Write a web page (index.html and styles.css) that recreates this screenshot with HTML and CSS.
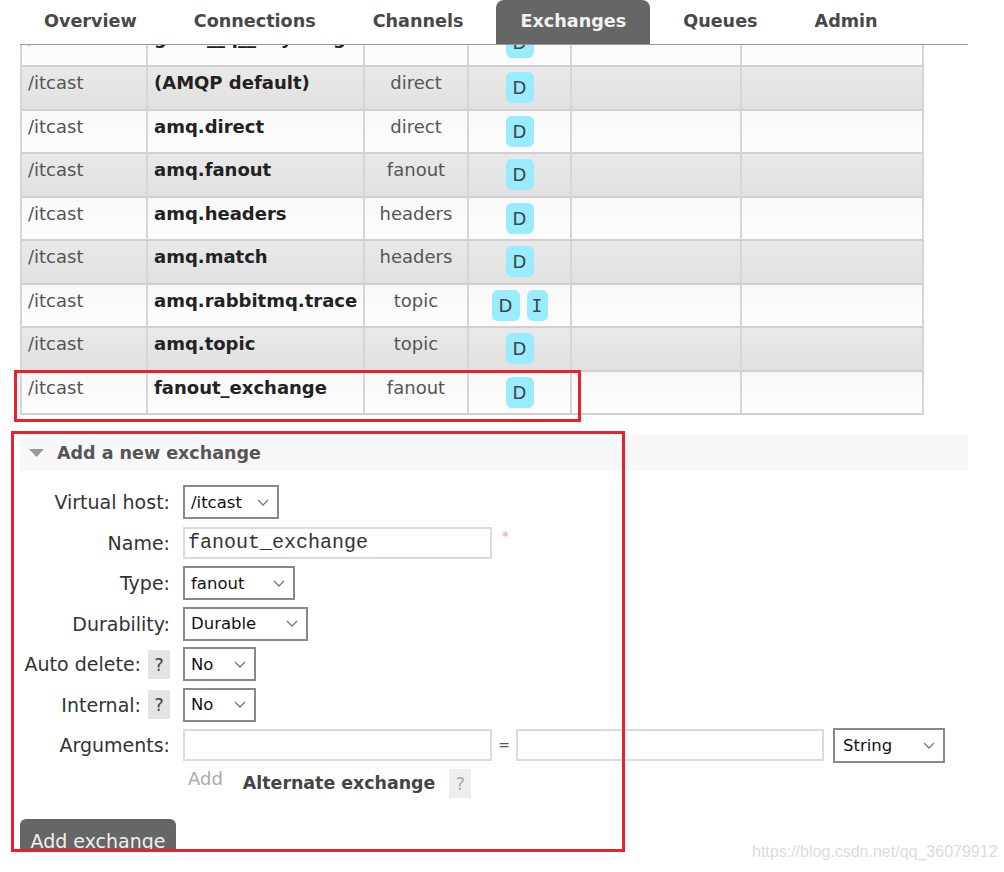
FILE: index.html
```html
<!DOCTYPE html>
<html>
  <head>
    <meta charset="utf-8">
    <title>RabbitMQ Management - Exchanges</title>
    <link rel="stylesheet" href="styles.css">
  </head>

  <body>
    <div class="page">
      <!-- Top navigation -->
      <nav class="tabs">
        <a href="#">Overview</a>
        <a href="#">Connections</a>
        <a href="#">Channels</a>
        <a href="#" class="active">Exchanges</a>
        <a href="#">Queues</a>
        <a href="#">Admin</a>
      </nav>

      <!-- Exchange list (scrolled, first row cut under the nav) -->
      <div class="list-wrap">
        <table class="list">
          <colgroup>
            <col class="c-vhost">
            <col class="c-name">
            <col class="c-type">
            <col class="c-feat">
            <col class="c-rate-in">
            <col class="c-rate-out">
          </colgroup>
          <tr class="alt2 cut">
            <td>/</td>
            <td class="name">gtest__q__anything</td>
            <td class="type">fanout</td>
            <td class="features"><span class="badge">D</span></td>
            <td></td><td></td>
          </tr>
          <tr class="alt1">
            <td>/itcast</td>
            <td class="name">(AMQP default)</td>
            <td class="type">direct</td>
            <td class="features"><span class="badge">D</span></td>
            <td></td><td></td>
          </tr>
          <tr class="alt2">
            <td>/itcast</td>
            <td class="name">amq.direct</td>
            <td class="type">direct</td>
            <td class="features"><span class="badge">D</span></td>
            <td></td><td></td>
          </tr>
          <tr class="alt1">
            <td>/itcast</td>
            <td class="name">amq.fanout</td>
            <td class="type">fanout</td>
            <td class="features"><span class="badge">D</span></td>
            <td></td><td></td>
          </tr>
          <tr class="alt2">
            <td>/itcast</td>
            <td class="name">amq.headers</td>
            <td class="type">headers</td>
            <td class="features"><span class="badge">D</span></td>
            <td></td><td></td>
          </tr>
          <tr class="alt1">
            <td>/itcast</td>
            <td class="name">amq.match</td>
            <td class="type">headers</td>
            <td class="features"><span class="badge">D</span></td>
            <td></td><td></td>
          </tr>
          <tr class="alt2">
            <td>/itcast</td>
            <td class="name">amq.rabbitmq.trace</td>
            <td class="type">topic</td>
            <td class="features"><span class="badge">D</span><span class="badge badge-i">I</span></td>
            <td></td><td></td>
          </tr>
          <tr class="alt1">
            <td>/itcast</td>
            <td class="name">amq.topic</td>
            <td class="type">topic</td>
            <td class="features"><span class="badge">D</span></td>
            <td></td><td></td>
          </tr>
          <tr class="alt2">
            <td>/itcast</td>
            <td class="name">fanout_exchange</td>
            <td class="type">fanout</td>
            <td class="features"><span class="badge">D</span></td>
            <td></td><td></td>
          </tr>
        </table>
      </div>

      <!-- Add a new exchange -->
      <div class="section">
        <h2 class="section-head">
          <svg class="arrow" width="15" height="8" viewBox="0 0 15 8"><polygon points="0,0 15,0 7.5,8" fill="#999"/></svg>
          Add a new exchange
        </h2>

        <div class="form">
          <div class="label">Virtual host:</div>
          <div class="field">
            <div class="select s-vhost"><span>/itcast</span><svg width="12" height="7" viewBox="0 0 12 7"><polyline points="1,1 6,6 11,1" fill="none" stroke="#777" stroke-width="1.3"/></svg></div>
          </div>

          <div class="label">Name:</div>
          <div class="field">
            <div class="input mono">fanout_exchange</div>
            <span class="required">*</span>
          </div>

          <div class="label">Type:</div>
          <div class="field">
            <div class="select s-type"><span>fanout</span><svg width="12" height="7" viewBox="0 0 12 7"><polyline points="1,1 6,6 11,1" fill="none" stroke="#777" stroke-width="1.3"/></svg></div>
          </div>

          <div class="label">Durability:</div>
          <div class="field">
            <div class="select s-dur"><span>Durable</span><svg width="12" height="7" viewBox="0 0 12 7"><polyline points="1,1 6,6 11,1" fill="none" stroke="#777" stroke-width="1.3"/></svg></div>
          </div>

          <div class="label">Auto delete: <span class="help">?</span></div>
          <div class="field">
            <div class="select s-bool"><span>No</span><svg width="12" height="7" viewBox="0 0 12 7"><polyline points="1,1 6,6 11,1" fill="none" stroke="#777" stroke-width="1.3"/></svg></div>
          </div>

          <div class="label">Internal: <span class="help">?</span></div>
          <div class="field">
            <div class="select s-bool"><span>No</span><svg width="12" height="7" viewBox="0 0 12 7"><polyline points="1,1 6,6 11,1" fill="none" stroke="#777" stroke-width="1.3"/></svg></div>
          </div>

          <div class="label">Arguments:</div>
          <div class="field args">
            <div class="input arg-key"></div>
            <span class="eq">=</span>
            <div class="input arg-val"></div>
            <div class="select s-argtype"><span>String</span><svg width="12" height="7" viewBox="0 0 12 7"><polyline points="1,1 6,6 11,1" fill="none" stroke="#777" stroke-width="1.3"/></svg></div>
          </div>

          <div class="label"></div>
          <div class="field extra">
            <span class="add-link">Add</span>
            <span class="alt-label">Alternate exchange</span>
            <span class="help help-light">?</span>
          </div>
        </div>

        <div class="submit">
          <button type="button">Add exchange</button>
        </div>
      </div>

      <!-- red annotation boxes -->
      <div class="mark mark-row"></div>
      <div class="mark mark-form"></div>

      <div class="watermark">https://blog.csdn.net/qq_36079912</div>
    </div>
  </body>
</html>
```

FILE: styles.css
```css
/* Reset */
* {
  margin: 0;
  padding: 0;
  box-sizing: border-box;
}

body {
  font-family: "DejaVu Sans", Verdana, sans-serif;
  font-size: 18px;
  color: #333;
  background-color: #fff;
}

.page {
  position: relative;
  width: 1004px;
  height: 872px;
  overflow: hidden;
}

/* Tabs */
.tabs {
  display: flex;
  gap: 9px;
  margin-left: 20px;
  width: 948px;
  height: 45px;
  border-bottom: 1px solid #999;
}
.tabs a {
  display: block;
  height: 44px;
  padding: 0 24px;
  line-height: 42px;
  font-size: 17.6px;
  font-weight: bold;
  color: #484848;
  text-decoration: none;
  border-radius: 8px 8px 0 0;
}
.tabs a.active {
  background-color: #666;
  color: #f2f2f2;
}

/* Exchange list */
.list-wrap {
  margin-left: 20px;
  width: 904px;
  overflow: hidden;
}
.list {
  width: 904px;
  margin-top: -21.5px;
  border-collapse: separate;
  border-spacing: 0;
  table-layout: fixed;
  border-left: 2px solid #d6d6d6;
}
.c-vhost { width: 126px; }
.c-name { width: 217px; }
.c-type { width: 104px; }
.c-feat { width: 103px; }
.c-rate-in { width: 170px; }
.c-rate-out { width: 182px; }

.list td {
  height: 43.5px;
  padding: 5px 6px 0;
  border-right: 2px solid #d6d6d6;
  border-bottom: 2px solid #d0d0d0;
  vertical-align: top;
  line-height: 22px;
  color: #555;
  white-space: nowrap;
  overflow: hidden;
}
.list tr.cut td {
  padding-top: 3px;
}
.list tr.alt1 td {
  background: linear-gradient(#e9e9e9, #e1e1e1);
}
.list tr.alt2 td {
  background: linear-gradient(#f8f8f8, #fdfdfd);
}
.list td.name {
  font-weight: bold;
  color: #222;
}
.list td.type {
  text-align: center;
}
.list td.features {
  text-align: center;
  padding-left: 0;
  padding-right: 0;
}

.badge {
  display: inline-block;
  width: 28px;
  height: 31px;
  line-height: 31px;
  background-color: #99ebff;
  border-radius: 6px;
  color: #444;
  text-align: center;
  vertical-align: top;
}
.badge-i {
  width: 21px;
  margin-left: 7px;
  font-family: "DejaVu Sans Mono", monospace;
}

/* Add a new exchange */
.section-head {
  display: flex;
  align-items: center;
  margin: 20px 0 0 20px;
  width: 948px;
  height: 36px;
  padding-left: 9px;
  background-color: #f8f8f8;
  font-size: 17.5px;
  font-weight: bold;
  color: #555;
}
.section-head .arrow {
  margin-right: 13px;
}

.form {
  display: grid;
  grid-template-columns: 150px auto;
  grid-template-rows: repeat(7, 40.5px) 35px;
  column-gap: 13px;
  align-items: center;
  margin: 11px 0 0 20px;
}
.label {
  display: flex;
  justify-content: flex-end;
  align-items: center;
  gap: 7px;
  font-size: 19px;
  color: #333;
  white-space: nowrap;
}
.field {
  display: flex;
  align-items: center;
}

.help {
  display: inline-flex;
  align-items: center;
  justify-content: center;
  width: 22px;
  height: 29px;
  background-color: #e4e4e4;
  font-size: 18px;
  color: #444;
}
.help-light {
  background-color: #eee;
  color: #aaa;
  margin-left: 14px;
}

.select {
  display: inline-flex;
  align-items: center;
  justify-content: space-between;
  height: 34px;
  padding: 0 8px 0 6px;
  border: 2px solid #8a8a8a;
  font-size: 16.5px;
  color: #111;
  background-color: #fff;
}
.s-vhost { width: 96px; }
.s-type { width: 112px; }
.s-dur { width: 125px; }
.s-bool { width: 73px; }
.s-argtype { width: 112px; height: 35px; margin-left: 9px; padding-left: 8px; }

.input {
  height: 32px;
  border: 2px solid #dcdcdc;
  background-color: #fff;
}
.input.mono {
  width: 309px;
  padding-left: 3px;
  font-family: "Liberation Mono", "Courier New", monospace;
  font-size: 20px;
  line-height: 28px;
  color: #333;
}
.required {
  align-self: flex-start;
  margin: 1px 0 0 10px;
  color: #f99;
  font-size: 14px;
}

.arg-key { width: 309px; }
.arg-val { width: 308px; }
.eq {
  width: 24px;
  text-align: center;
  font-size: 14px;
  color: #555;
}

.add-link {
  padding-left: 5px;
  margin-top: -9px;
  color: #aaa;
}
.alt-label {
  margin-left: 20px;
  font-size: 17.4px;
  font-weight: bold;
  color: #444;
}

.submit {
  margin: 18px 0 0 20px;
  height: 33px;
  overflow: hidden;
}
.submit button {
  width: 156px;
  height: 44px;
  border: none;
  border-radius: 6px;
  background-color: #666;
  color: #f0f0f0;
  font-family: "DejaVu Sans", Verdana, sans-serif;
  font-size: 19px;
}

/* Annotation boxes over the screenshot */
.mark {
  position: absolute;
  border: 3px solid #e8212b;
}
.mark-row {
  left: 14px;
  top: 370px;
  width: 567px;
  height: 52px;
}
.mark-form {
  left: 11px;
  top: 431px;
  width: 614px;
  height: 421px;
}

.watermark {
  position: absolute;
  left: 752px;
  top: 843px;
  font-family: "Liberation Sans", Arial, sans-serif;
  font-size: 16px;
  color: #dcdcdc;
}
```
